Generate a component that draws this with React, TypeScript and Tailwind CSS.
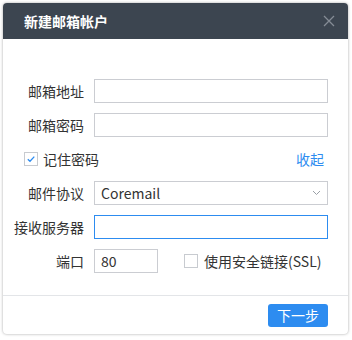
import { useState } from "react";

const font = { fontFamily: '"Microsoft YaHei", "Noto Sans CJK SC", "Noto Sans", sans-serif' };

function Label({ children }: { children: string }) {
  return <span className="w-[81px] shrink-0 text-right text-[14px] leading-none text-[#333]">{children}</span>;
}

function Box({ checked, onClick }: { checked: boolean; onClick: () => void }) {
  return (
    <span
      onClick={onClick}
      className="flex h-[14px] w-[14px] shrink-0 items-center justify-center border border-[#c8cbd0] bg-white"
    >
      {checked && (
        <svg width="10" height="10" viewBox="0 0 10 10" fill="none">
          <path d="M1.8 5.2 L4 7.3 L8.3 2.6" stroke="#2d8cf0" strokeWidth="1.3" />
        </svg>
      )}
    </span>
  );
}

export default function App() {
  const [remember, setRemember] = useState(true);
  const [ssl, setSsl] = useState(false);

  return (
    <div className="h-[340px] w-[352px] bg-white p-[3px]" style={font}>
      <div className="flex h-[331px] w-[345px] flex-col overflow-hidden rounded-[4px] bg-white shadow-[0_0_3px_rgba(0,0,0,0.35)]">
        <div className="flex h-[36px] shrink-0 items-center justify-between bg-[#3c4550] pl-[21px] pr-[13px]">
          <span className="text-[14px] font-bold text-white">新建邮箱帐户</span>
          <svg width="12" height="12" viewBox="0 0 12 12">
            <path d="M1 1 L11 11 M11 1 L1 11" stroke="#858c95" strokeWidth="1.3" />
          </svg>
        </div>

        <div className="flex flex-col gap-[10px] pr-[20px] pt-[40px]">
          <div className="flex h-[24px] items-center gap-[10px]">
            <Label>邮箱地址</Label>
            <input className="h-[24px] w-[234px] border border-[#cbcdd2] px-[6px] text-[14px] outline-none" />
          </div>
          <div className="flex h-[24px] items-center gap-[10px]">
            <Label>邮箱密码</Label>
            <input type="password" className="h-[24px] w-[234px] border border-[#cbcdd2] px-[6px] text-[14px] outline-none" />
          </div>
          <div className="flex h-[24px] items-center justify-between pl-[21px] pr-[4px]">
            <div className="flex items-center gap-[5px]">
              <Box checked={remember} onClick={() => setRemember((v) => !v)} />
              <span className="text-[14px] text-[#333]">记住密码</span>
            </div>
            <span className="text-[14px] text-[#2d8cf0]">收起</span>
          </div>
          <div className="flex h-[24px] items-center gap-[10px]">
            <Label>邮件协议</Label>
            <div className="flex h-[24px] w-[234px] items-center justify-between border border-[#cbcdd2] pl-[6px] pr-[6px]">
              <span className="text-[14px] text-[#333]">Coremail</span>
              <svg width="9" height="6" viewBox="0 0 9 6" fill="none">
                <path d="M1 1 L4.5 4.5 L8 1" stroke="#9aa0a6" strokeWidth="1" />
              </svg>
            </div>
          </div>
          <div className="flex h-[24px] items-center gap-[10px]">
            <Label>接收服务器</Label>
            <input className="h-[24px] w-[234px] border border-[#2d8cf0] px-[6px] text-[14px] outline-none" />
          </div>
          <div className="flex h-[24px] items-center gap-[10px]">
            <Label>端口</Label>
            <input
              defaultValue="80"
              className="h-[24px] w-[64px] border border-[#cbcdd2] px-[6px] text-[14px] text-[#333] outline-none"
            />
            <div className="ml-[16px] flex items-center gap-[6px]">
              <Box checked={ssl} onClick={() => setSsl((v) => !v)} />
              <span className="text-[14px] text-[#333]">使用安全链接(SSL)</span>
            </div>
          </div>
        </div>

        <div className="mt-auto flex h-[39px] items-center justify-end border-t border-[#e3e5e8] pr-[20px]">
          <button className="h-[23px] w-[60px] rounded-[3px] bg-[#2d8cf0] text-[14px] text-white">下一步</button>
        </div>
      </div>
    </div>
  );
}
